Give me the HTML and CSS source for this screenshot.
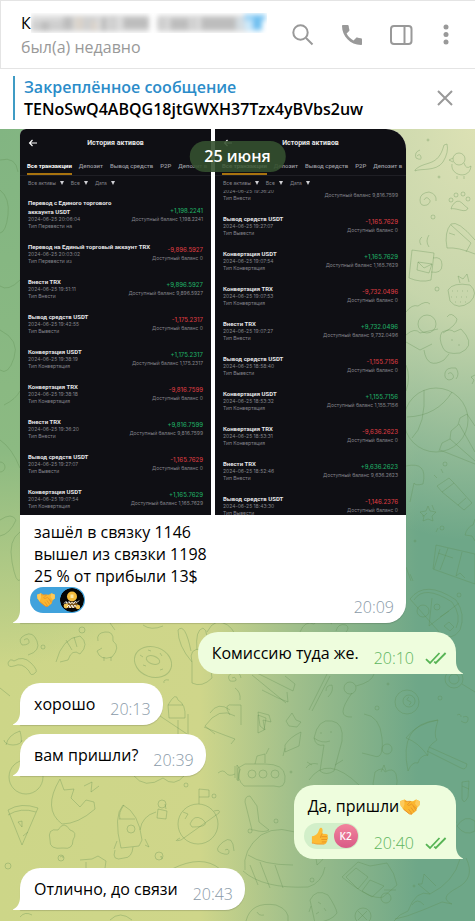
FILE: index.html
```html
<!DOCTYPE html>
<html lang="ru">
<head>
<meta charset="utf-8">
<meta name="viewport" content="width=device-width, initial-scale=1">
<title>Чат</title>
<link rel="stylesheet" href="styles.css">
</head>
<body>
<svg class="sprite" aria-hidden="true">
  <symbol id="handshake" viewBox="0 0 22 18">
    <path d="M1.2 3.2 5.6 1.6 8.4 3.4 11 2.9 14 3.2 17 1.6 20.8 3.2 20.6 7 18.4 9.4 17 13 12.6 16.4 9.6 15.6 4.2 11.2 1.6 7.2z" fill="#fbb62f"/>
    <path d="M5.6 1.6 1.2 3.2 1.6 7.2 4 10.4 5.4 6.4z" fill="#fdca5c"/>
    <path d="M17 1.6 20.8 3.2 20.6 7 18.6 9 16 5.8z" fill="#fdca5c"/>
    <path d="M6 3.2C8.4 3.8 9.8 3 11.6 3.4L8.4 6.6C9.4 8 11 7.2 12.4 6L17.4 10.6M14.6 8.600 17 12.400M12.200 9.800 15 13.800M9.800 11.400 12.800 15.600" fill="none" stroke="#e08a2a" stroke-width=".7" stroke-linecap="round" stroke-linejoin="round"/>
    <path d="M4.600 11.200 10.400 15.900 12.800 16.200" fill="none" stroke="#e68a26" stroke-width=".9"/>
  </symbol>
  <symbol id="thumb" viewBox="0 0 20 20">
    <path d="M1 10.4C3.6 10.4 6 8.6 7.6 6.4 8.8 4.6 9 1 10.8 .8 13 .8 13.4 3.6 12.4 7.4L17 7.8C19 8 19.4 10.2 18 10.8 19.6 11.6 19.2 13.6 17.8 13.8 18.8 14.8 18.2 16.4 17 16.6 17.4 18 16.4 19 15 19H8C5 19 3.6 18 1 17.8z" fill="#fdbb34"/>
    <path d="M12.4 7.4C11.6 9.6 10.4 10.2 10.6 11.6M12 10.8H17.8M12 13.8H17.6M12.4 16.6H16.8" fill="none" stroke="#e18a1e" stroke-width=".9" stroke-linecap="round"/>
    <path d="M1 17.8C3.6 18 5 19 8 19H15" fill="none" stroke="#ee9a2b" stroke-width="1"/>
  </symbol>
  <symbol id="ticks" viewBox="0 0 22 14">
    <path d="M1 8.2 5 12 14.5 2M9.2 10.6 10.8 12 20.6 2" fill="none" stroke="#57b455" stroke-width="1.8"/>
  </symbol>
  <symbol id="tail" viewBox="0 0 8 13">
    <path d="M8 0H7C7 6 4.500 10.500 0 12.400V13H8z" fill="currentColor"/>
  </symbol>
  <symbol id="back" viewBox="0 0 10 8">
    <path d="M9 4H1.500M4.500 1 1.500 4 4.500 7" fill="none" stroke="#fff" stroke-width="1.100"/>
  </symbol>
</svg>

<div class="app">
  <header class="topbar">
    <div class="peer">
      <h1 class="peer-name"><span>К</span>
        <svg class="veil" viewBox="0 0 236 20" aria-hidden="true">
          <defs><filter id="soft" x="-2%" y="-10%" width="104%" height="120%"><feGaussianBlur stdDeviation="2.600"/></filter></defs>
          <g filter="url(#soft)">
            <path fill="#dedede" d="M0 2H118V19H0zM127 2H218V19H127z"/>
            <path fill="#cfcfcf" d="M0 8H10V18H0zM18 7H32V18H18zM52 4H66V17H52zM78 3H86V18H78zM126 4H136V17H126zM160 4H166V17H160z"/>
            <path fill="#bdbdbd" d="M10 8H18V18H10zM32 4H42V17H32zM70 4H76V18H70zM92 4H118V16H92zM139 5H158V17H139zM170 4H206V17H170z"/>
            <path fill="#dad3ca" d="M44 4H52V17H44zM60 8H66V18H60z"/>
            <path fill="#d4dde2" d="M205 4H214V17H205z"/>
            <path fill="#9fd6f7" d="M213 1H235V8H213zM220 8H231V18H220z"/>
            <path fill="#6fc0f0" d="M222 3H231V16H222z"/>
            <path fill="#cdeafb" d="M214 8H221V18H214z"/>
          </g>
        </svg>
      </h1>
      <p class="peer-status">был(а) недавно</p>
    </div>
    <nav class="tools" aria-label="Действия">
      <button type="button" aria-label="Поиск"><svg viewBox="0 0 24 24"><circle cx="9.500" cy="9.500" r="7.200"/><path d="M15 15 21.500 21.500"/></svg></button>
      <button type="button" aria-label="Позвонить"><svg viewBox="0 0 24 24"><path class="solid" d="M2.800 2H7.600C8.200 2 8.600 2.400 8.700 3 8.800 4.400 9 5.600 9.400 6.800 9.500 7.200 9.400 7.700 9.100 8L6.600 10.500C8.200 13.500 10.500 15.900 13.500 17.400L16 14.900C16.300 14.600 16.800 14.500 17.200 14.600 18.400 15 19.600 15.200 20.900 15.300 21.600 15.400 22 15.800 22 16.400V20.900C22 21.600 21.600 22 20.900 22 10.500 22 2 13.500 2 3.100 2 2.400 2.300 2 2.800 2z"/></svg></button>
      <button type="button" aria-label="Боковая панель"><svg viewBox="0 0 24 24"><rect x="2" y="3" width="20.500" height="18" rx="3"/><path d="M15.500 3V21"/></svg></button>
      <button type="button" aria-label="Меню"><svg class="narrow" viewBox="4 0 16 24"><g class="solid"><circle cx="12" cy="4" r="2.500"/><circle cx="12" cy="11.500" r="2.500"/><circle cx="12" cy="19" r="2.500"/></g></svg></button>
    </nav>
  </header>

  <section class="pinned">
    <a class="pinned-link" href="#album">
      <strong>Закреплённое сообщение</strong>
      <span>TENoSwQ4ABQG18jtGWXH37Tzx4yBVbs2uw</span>
    </a>
    <button type="button" class="pinned-close" aria-label="Закрыть"><svg viewBox="0 0 16 16"><path d="M1 1 15 15M15 1 1 15"/></svg></button>
  </section>

  <main class="chat">
    <svg class="doodles" viewBox="0 129 475 792" preserveAspectRatio="xMinYMin slice" aria-hidden="true">
      <!-- upper right strip -->
      <path d="M415 170C425 160 438 168 444 145L447 144Q449 152 443 162C436 172 420 168 415 171z"/>
      <circle cx="459" cy="159" r="6"/><path d="M452 164C450 176 470 180 471 166Q466 170 464 163M453 158l-4 2 4 2M457 176v3M464 176v3"/>
      <path d="M424 200q2-4 5-1t-2 6q-7 2-7-5t9-8q8 2 7 9M417 156q3-3 4 1t-5 1q-2-6 4-8"/>
      <path d="M452 206q5-8 10-3t6 5q-1 4-8 2t-9-1z"/><circle cx="451" cy="200" r="2"/><circle cx="456" cy="195" r="2"/><circle cx="463" cy="194" r="2"/><circle cx="468" cy="199" r="2"/>
      <path d="M475 254Q458 247 447 248 444 232 451 224 458 220 475 240M451 225l20 18-5 9M449 233l6 2"/>
      <path d="M412 250l22 3-3 27q-10 3-22-2zM433 258q9-2 9 7t-11 7M418 262l14 2-3 9-12-3zM418 262l6 6 8-4M421 245q-3-5 1-8M429 247q-4-6 0-12"/>
      <path d="M448 290q5-8 22-5 9 8 0 17-12 9-20-1zM460 283l-2-7 5 3 4-5 2 8"/><path stroke-dasharray="1 4" d="M452 291h18M451 297h20M455 302h14"/>
      <circle cx="427" cy="324" r="9"/><path d="M406 335q9-8 14-2l18-4M406 342l14 8 12-6M424 350q3 20 20 10l5-6M406 312q6-8 12-6 8-6 12-2M443 333q14-8 14-14-6-8-10-2"/>
      <path d="M442 332q9-4 12 0l7-3 5 6q8 12-6 18-14 2-17-5-5-10-1-16zM452 339v2M459 344v2"/>
      <path d="M448 374q3-3 5 1t-4 5q-5-1-4-7t11-5q4 6 0 11M475 375l-4 2 3 3-2 4M406 365q5 12 0 26"/>
      <circle cx="436" cy="420" r="32"/><path d="M424 390q2 35-12 48M452 392q-15 24-45 25M467 414l-7 4-2 7-7 6-1 8-8 4-3 8M467 414l8 12M459 424l16 28M450 439l25 22M440 450l35 14M406 466q22-5 17 18-8 2-9-1l-4 19"/>
      <path d="M437 486l12-8 5 5-12 9zM442 492l22 18 8-7-18-20M458 505l8-7M437 478l-3-3M443 473l-2-4M428 506l2 5 6 1-4 4 1 5-5-2-5 2 1-5-4-4 6-1z"/>
      <circle cx="428" cy="140" r="1"/><circle cx="433" cy="217" r="2"/><circle cx="437" cy="289" r="2"/><circle cx="445" cy="464" r="2"/><circle cx="439" cy="177" r="1"/>
      <!-- left edge -->
      <path d="M0 160q16-4 18 12M0 190q10 8 8 25t-8 18M20 280q-12 12-20 6M0 330q20 10 14 28t-14 12M4 405q12-6 16-14M0 440q12 8 20 28M0 462a5 5 0 0 1 0 10M0 520q12-8 16 0-6 14-16 16M20 532q-12 8-8 30t8 18"/>
      <!-- between the album and the next messages -->
      <path d="M24 640q4-3 5 1t-7 4q-5-6 3-10t12 6-9 14M8 663q2-5 6-2 9-6 17 2t4 10q-4 4-6-2-7-9-15-5-6 2-6-3zM56 662q6-24 24-26 10 8 0 18-8-6-12 6l-8 2M66 640l6 10M74 637l3 10M98 641q-2-8 7-9t8 9q8 6-1 16-12 4-15-6l5-3M104 657v4M111 657v4"/>
      <ellipse cx="153" cy="662" rx="19" ry="15" transform="rotate(20 153 662)"/><ellipse cx="153" cy="660" rx="7" ry="4" transform="rotate(20 153 660)"/><path d="M140 655l3 2M148 650l3 1M160 653l2 3M143 665l3 1M160 670l3-1"/>
      <path d="M192 662q-14-16-14-32 7-8 13 21M197 650q-2-20 6-22 7 3 1 24M192 662q-4-14 10-13t8 14l2 15q-10 10-20 5zM232 678q3-2 4 1t-6 2q-4-6 3-8t8 5M207 632q4-8 10-10 12 0 18 12M143 625q8 6 20 1M110 623l5 7"/>
      <path d="M164 683q-1-4 5-3M168 705q8-14 10-5 8 4 7 18h-16zM168 705h15M230 715q-8-12 4-10l7 0v20M210 713q8-12 20-3"/>
      <circle cx="82" cy="630" r="3"/><circle cx="43" cy="647" r="2"/><path d="M0 688l10 8M6 745q2-10 14-14 2 8 1 11M4 740a9 5 0 0 0 18 0M160 716l27 18M178 720v16h10v-22"/>
      <!-- stars, drink, pizza -->
      <path d="M422 516q2 1 5-3M432 505l2 5M465 535q2-8 8-10l2-6M465 535l7 1 3 5M438 528l-2 4M436 545l39 9v30l-42-15zM440 549l-6 20M448 548q-4 12-8 22M462 552l-6 24 4-3 5 5M438 553l15 5"/>
      <path d="M410 599q15-20 46 1 10 14 4 30-8 12-20 3zM414 600q10-16 38 2 10 14 4 26M432 598l-3 28M429 626l30-23M440 617l9-6"/><circle cx="423" cy="611" r="6"/><circle cx="437" cy="607" r="3"/><path d="M444 626l5-4 5 5-4 4zM406 567l5 14M410 574l3 7"/>
      <circle cx="442" cy="528" r="2"/><circle cx="415" cy="541" r="1"/><circle cx="459" cy="595" r="2"/>
      <path d="M300 632q5-12 14-8 8-10 18 0M336 631q2-8 10-6 4 3 0 7"/>
      <circle cx="454" cy="679" r="9"/><circle cx="454" cy="679" r="5"/><path d="M462 684l13 8"/>
      <path d="M252 675l34 28M257 673l36 18 2-7-10-8M262 690l16 8 10 4-1-10M309 710l18-36 7-10M312 711l18-35"/>
      <circle cx="350" cy="688" r="6"/><path d="M356 686q16-4 18-12M352 693q-18 25 0 24M328 697q6-6 4-12-6 0-6 6"/>
      <circle cx="407" cy="702" r="12"/><circle cx="409" cy="701" r="6"/><path d="M409 697q-4 3 0 4t0 4M457 715q4-2 4 2M235 688q6 4 5 12M258 712l2 14 5 4-2-10 8 2-2-7zM292 713l4 7 5 2-4 5-8-1-3-5z"/>
      <circle cx="388" cy="684" r="1"/><circle cx="377" cy="708" r="2"/><circle cx="440" cy="698" r="2"/>
      <!-- right middle -->
      <path d="M258 715l8 3-2 12-6 3zM285 745q5-8 16-13l-2 14-14 6zM285 748l-2 8"/>
      <path d="M314 738q4-20 18-17 12 2 10 20l-8 30q-8 5-14 0l4-26q-8 2-10-7zM314 738q8 6 16 3M321 732v2M331 731v2M306 768q4-6 12-4M335 765l8-5M309 780q18-26 50 5M312 765l-5-3"/>
      <path d="M364 714q16 2 18 24t-8 18l-12-3"/><circle cx="387" cy="749" r="5"/>
      <path d="M438 720q-40 4-30 51 4-10 10-8 2-8 10-8-2-8 9-15-4-4 1-20zM406 738q12 4 22 18M438 720q-22 4-32 18M429 747l38 17q-1 7-6 4l-34-17"/>
      <path d="M375 772q8-6 10 0 8-5 11 2 4 15-6 20-14 4-17-10zM381 772l3-7 2 6"/>
      <path d="M240 769q-4 10 4 17h30q12 4 11-10-1-12-20-12h-20l-7 4v13zM255 764l2-8 8-2v9M266 754l3-6M240 769l-3-4v15"/><circle cx="252" cy="774" r="4"/><circle cx="263" cy="774" r="4"/><circle cx="275" cy="774" r="4"/>
      <circle cx="291" cy="772" r="1"/><path d="M462 782l7-1-1 16q-4 8-6 2zM462 786l7 3M457 826q8-12 18-5v10q-10 6-18-5zM456 823l-1-7M463 717q6-2 5 3t-7 1"/>
      <!-- lower left -->
      <circle cx="26" cy="777" r="17"/><path d="M60 779q-18 30 2 45 16 0 33-15l-1-7-8-2-6 7-9-9 3-9-10 1zM84 786l8-4-1 10 8-6M50 840q-3-12 8-10 6-10 12 0 8 2 3 10 0 10-10 8-14 2-13-8z"/>
      <path d="M8 810q13-8 30-2l-16 37zM8 815q13-8 28-3M18 822l4-1v6zM28 832l-5 4"/>
      <path d="M121 848q-8-32 2-43 16 8 19 35l-3 6zM119 819h16M124 805q-6 8-4 14"/><circle cx="131" cy="829" r="4"/><path d="M140 830q2-14 16-18M114 849l3-8M145 845l4 2-4-8M115 850q-4 12 9 8 8 0 9-11"/><circle cx="162" cy="804" r="4"/><path d="M158 809l9 2-1 8-9-1zM166 809l-1-5"/>
      <circle cx="198" cy="824" r="20"/><path d="M180 838q-8 4 1 2l38-27q2-4-5-2M199 804v-15l10 1v7h-10M190 824q4-10 12-5 10 8-10 8zM183 812l5 2-3 5"/>
      <path d="M225 850q4-2 4 2t-8 1 2-11 11 9M60 857q3-2 3 1M80 860l12-1 6-3 8 5-1 7M86 869v-7M33 875q5-10 12-5M160 857q2-2 2 2M172 869q30-15 48 0M20 917q5-6 12-2M110 920q10-10 22 0M215 734l-10-8q14-20 30-10M204 727q12 5 31 12l-4 5M218 773q5-4 8 0t9 1M235 778v-12M133 775q12 15 30 3 11 10 22-3"/>
      <circle cx="186" cy="785" r="2"/><circle cx="214" cy="796" r="2"/><circle cx="61" cy="858" r="3"/><circle cx="8" cy="866" r="3"/><circle cx="159" cy="856" r="4"/>
      <!-- lower right: whale, candy, gator, ice cream -->
      <path d="M252 830l-5-20-2-8q0-6 5-6l7 10 2 16 10 8q-5 3-15 0zM245 870q-3-20 16-35 20-12 44 2 11 12 12 28 10-8 8-13l-6-1M243 871q20 18 65 16 14-4 17-20M248 855q15 10 45 10M250 865l8 20M260 862l10 26M275 865l8 23"/>
      <path d="M342 877l16-15 12 4 17-3q8 10 10 22l-14 12q-12 4-41-20zM346 877l10-9 12 9-10 12zM370 880l14 6-12 11-10-6zM384 890h12"/><circle cx="386" cy="898" r="5"/>
      <path d="M394 921q5-7 14-10 8-22 22-17 24-12 30-35l-8-7M466 858q10 20-9 30t-5 16l-10-2q-18 8-35 14l-12 3M430 894l-12-10 4 0 2-10 12 12M412 905q5-8 12 0"/>
      <path d="M310 900q6-12 18-5 8 12 9 18-5 8-22 10zM311 906l-2 6M318 902l3 2M324 908l2 3M316 914l3-2"/>
      <circle cx="363" cy="916" r="8"/><path d="M358 911l9 9M367 911l-9 9M246 921q5-20 30-16 14 5 12 16M257 912q2 4 7 3"/>
      <circle cx="276" cy="821" r="2"/><circle cx="250" cy="831" r="2"/><circle cx="312" cy="880" r="2"/><circle cx="414" cy="886" r="1"/>
    </svg>
    <time class="day">25 июня</time>

    <article class="bubble in album" id="album">
      <div class="shots">
        <section class="shot">
          <div class="shot-head"><svg><use href="#back"/></svg><h2>История активов</h2></div>
          <div class="shot-tabs"><b>Все транзакции</b><span>Депозит</span><span>Вывод средств</span><span>P2P</span><span>Депозит в</span></div>
          <div class="shot-filters"><span>Все активы</span><span>Все</span><span>Дата</span></div>
          <ul class="ops">
            <li><div><h3>Перевод с Единого торгового<br>аккаунта USDT</h3><p>2024-06-25 20:06:04</p><p>Тип Перевести на</p></div><div class="sum"><b class="up">+1,198.2241</b><p>Доступный баланс 1,198.2241</p></div></li>
            <li><div><h3>Перевод на Единый торговый аккаунт TRX</h3><p>2024-06-25 20:03:02</p><p>Тип Перевести из</p></div><div class="sum"><b class="down">-9,896.5927</b><p>Доступный баланс 0</p></div></li>
            <li><div><h3>Внести TRX</h3><p>2024-06-25 19:51:11</p><p>Тип Внести</p></div><div class="sum"><b class="up">+9,896.5927</b><p>Доступный баланс 9,896.5927</p></div></li>
            <li><div><h3>Вывод средств USDT</h3><p>2024-06-25 19:42:55</p><p>Тип Вывести</p></div><div class="sum"><b class="down">-1,175.2317</b><p>Доступный баланс 0</p></div></li>
            <li><div><h3>Конвертация USDT</h3><p>2024-06-25 19:38:19</p><p>Тип Конвертация</p></div><div class="sum"><b class="up">+1,175.2317</b><p>Доступный баланс 1,175.2317</p></div></li>
            <li><div><h3>Конвертация TRX</h3><p>2024-06-25 19:38:18</p><p>Тип Конвертация</p></div><div class="sum"><b class="down">-9,816.7599</b><p>Доступный баланс 0</p></div></li>
            <li><div><h3>Внести TRX</h3><p>2024-06-25 19:36:20</p><p>Тип Внести</p></div><div class="sum"><b class="up">+9,816.7599</b><p>Доступный баланс 9,816.7599</p></div></li>
            <li><div><h3>Вывод средств USDT</h3><p>2024-06-25 19:27:07</p><p>Тип Вывести</p></div><div class="sum"><b class="down">-1,165.7629</b><p>Доступный баланс 0</p></div></li>
            <li><div><h3>Конвертация USDT</h3><p>2024-06-25 19:07:54</p><p>Тип Конвертация</p></div><div class="sum"><b class="up">+1,165.7629</b><p>Доступный баланс 1,165.7629</p></div></li>
          </ul>
        </section>
        <section class="shot">
          <div class="shot-head"><svg><use href="#back"/></svg><h2>История активов</h2></div>
          <div class="shot-tabs"><b>Все транзакции</b><span>Депозит</span><span>Вывод средств</span><span>P2P</span><span>Депозит в</span></div>
          <div class="shot-filters"><span>Все активы</span><span>Все</span><span>Дата</span></div>
          <ul class="ops scrolled">
            <li><div><h3>Внести TRX</h3><p>2024-06-25 19:36:20</p><p>Тип Внести</p></div><div class="sum"><b class="up">+9,816.7599</b><p>Доступный баланс 9,816.7599</p></div></li>
            <li><div><h3>Вывод средств USDT</h3><p>2024-06-25 19:27:07</p><p>Тип Вывести</p></div><div class="sum"><b class="down">-1,165.7629</b><p>Доступный баланс 0</p></div></li>
            <li><div><h3>Конвертация USDT</h3><p>2024-06-25 19:07:54</p><p>Тип Конвертация</p></div><div class="sum"><b class="up">+1,165.7629</b><p>Доступный баланс 1,165.7629</p></div></li>
            <li><div><h3>Конвертация TRX</h3><p>2024-06-25 19:07:53</p><p>Тип Конвертация</p></div><div class="sum"><b class="down">-9,732.0496</b><p>Доступный баланс 0</p></div></li>
            <li><div><h3>Внести TRX</h3><p>2024-06-25 19:07:27</p><p>Тип Внести</p></div><div class="sum"><b class="up">+9,732.0496</b><p>Доступный баланс 9,732.0496</p></div></li>
            <li><div><h3>Вывод средств USDT</h3><p>2024-06-25 18:58:40</p><p>Тип Вывести</p></div><div class="sum"><b class="down">-1,155.7156</b><p>Доступный баланс 0</p></div></li>
            <li><div><h3>Конвертация USDT</h3><p>2024-06-25 18:53:32</p><p>Тип Конвертация</p></div><div class="sum"><b class="up">+1,155.7156</b><p>Доступный баланс 1,155.7156</p></div></li>
            <li><div><h3>Конвертация TRX</h3><p>2024-06-25 18:53:31</p><p>Тип Конвертация</p></div><div class="sum"><b class="down">-9,636.2623</b><p>Доступный баланс 0</p></div></li>
            <li><div><h3>Внести TRX</h3><p>2024-06-25 18:52:46</p><p>Тип Внести</p></div><div class="sum"><b class="up">+9,636.2623</b><p>Доступный баланс 9,636.2623</p></div></li>
            <li><div><h3>Вывод средств USDT</h3><p>2024-06-25 18:43:30</p><p>Тип Вывести</p></div><div class="sum"><b class="down">-1,146.2376</b><p>Доступный баланс 0</p></div></li>
          </ul>
        </section>
      </div>
      <div class="caption">
        <p class="text">зашёл в связку 1146<br>вышел из связки 1198<br>25 % от прибыли 13$</p>
        <div class="foot">
          <button type="button" class="reaction mine" aria-label="Рукопожатие">
            <svg class="emoji"><use href="#handshake"/></svg>
            <svg class="avatar" viewBox="0 0 24 24">
              <circle cx="12" cy="12" r="12" fill="#050505"/>
              <circle cx="12" cy="8.500" r="5" fill="#f4bb3c"/>
              <path d="M6 16q6-5 12 0l1 4H5z" fill="#7b561b"/>
              <circle cx="6" cy="18" r="2.400" fill="#f0c352"/><circle cx="18" cy="19" r="2.200" fill="#f0c352"/>
              <path d="M10.500 6.500h3v3.500h-3z" fill="#fde9a6"/>
              <path d="M4 15.500l2-2 1 2 2-2 1 2 2-1 2 1 1-2 2 1 2-2M7 19l2-2 1 3 2-3 1 3 2-3 1 2" fill="none" stroke="#fff" stroke-width=".9"/>
            </svg>
          </button>
          <time>20:09</time>
        </div>
      </div>
      <svg class="tail"><use href="#tail"/></svg>
    </article>

    <article class="bubble out line"><p class="text">Комиссию туда же.</p><div class="meta"><time>20:10</time><svg class="ticks"><use href="#ticks"/></svg></div><svg class="tail"><use href="#tail"/></svg></article>
    <article class="bubble in line"><p class="text">хорошо</p><div class="meta"><time>20:13</time></div><svg class="tail"><use href="#tail"/></svg></article>
    <article class="bubble in line"><p class="text">вам пришли?</p><div class="meta"><time>20:39</time></div><svg class="tail"><use href="#tail"/></svg></article>
    <article class="bubble out reacted">
      <p class="text">Да, пришли<svg class="emoji"><use href="#handshake"/></svg></p>
      <div class="foot">
        <button type="button" class="reaction" aria-label="Палец вверх"><svg class="emoji"><use href="#thumb"/></svg><span class="avatar initials">К2</span></button>
        <div class="meta"><time>20:40</time><svg class="ticks"><use href="#ticks"/></svg></div>
      </div>
      <svg class="tail"><use href="#tail"/></svg>
    </article>
    <article class="bubble in line"><p class="text">Отлично, до связи</p><div class="meta"><time>20:43</time></div><svg class="tail"><use href="#tail"/></svg></article>
  </main>
</div>
</body>
</html>
```
FILE: styles.css
```css
* { box-sizing: border-box; }
body, h1, h2, h3, p, ul { margin: 0; padding: 0; }
ul { list-style: none; }
body {
  font-family: "Open Sans", "Noto Sans", sans-serif;
  font-size: 16px;
  line-height: 22px;
  color: #000;
  background: #fff;
}
button {
  border: 0;
  padding: 0;
  background: none;
  font: inherit;
  cursor: pointer;
}
svg { display: block; }
.sprite { position: absolute; width: 0; height: 0; }
.app { display: flex; flex-direction: column; min-height: 100vh; }

/* Header */
.topbar {
  display: flex;
  align-items: center;
  justify-content: space-between;
  height: 69px;
  padding: 0 21px 0 20px;
  border: solid #e4e4e4;
  border-width: 1px 0 1px 1px;
}
.peer-name {
  display: flex;
  align-items: center;
  height: 24px;
  font-size: 16px;
  font-weight: 500;
}
.veil { width: 236px; height: 20px; }
.peer-status { line-height: 24px; color: #999; }
.tools { display: flex; gap: 25px; }
.tools svg {
  width: 24px;
  height: 24px;
  fill: none;
  stroke: #999;
  stroke-width: 2;
}
.tools .narrow { width: 16px; }
.tools .solid { fill: #999; stroke: none; }

/* Pinned message */
.pinned {
  display: flex;
  align-items: center;
  justify-content: space-between;
  height: 60px;
  padding: 0 22px 2px 13px;
}
.pinned-link {
  display: flex;
  flex-direction: column;
  padding-left: 9px;
  border-left: 2px solid #3f9bc4;
  color: #000;
  text-decoration: none;
  font-weight: 600;
}
.pinned-link strong { font-weight: 600; color: #2b8cc9; }
.pinned-close svg {
  width: 16px;
  height: 16px;
  stroke: #999;
  stroke-width: 2;
}

/* Chat */
.chat {
  position: relative;
  flex: 1;
  display: flex;
  flex-direction: column;
  align-items: flex-start;
  gap: 9px;
  padding: 0 19px 11px 20px;
  overflow: hidden;
  background:
    radial-gradient(ellipse 60% 52% at 100% 0, #dce1b4 0, #dce1b4cc 45%, #dce1b400 100%),
    radial-gradient(ellipse 70% 68% at 0 0, #82b582 0, #8cba82 60%, #a4c58200 100%),
    linear-gradient(to right, #cdd688 0, #cfd68a 42%, #a0bf8b 62%, #6ea788 88%);
}
.doodles {
  position: absolute;
  inset: 0;
  width: 100%;
  height: 100%;
  fill: none;
  stroke: #5c8c50;
  stroke-opacity: .32;
}
.day {
  position: absolute;
  z-index: 2;
  top: 12px;
  left: 50%;
  transform: translateX(-50%);
  padding: 4px 15px 5px;
  border-radius: 16px;
  background: #34502fe6;
  color: #fff;
  font-weight: 600;
}

/* Bubbles */
.bubble {
  --fill: #fff;
  position: relative;
  border-radius: 20px;
  background: var(--fill);
}
.bubble.in { border-bottom-left-radius: 0; box-shadow: 0 1px 1px #00000026; }
.bubble.out { --fill: #eefddd; align-self: flex-end; border-bottom-right-radius: 0; }
.tail {
  position: absolute;
  bottom: 0;
  left: -7px;
  width: 8px;
  height: 13px;
  color: var(--fill);
}
.out .tail { left: auto; right: -7px; transform: scaleX(-1); }
.line { display: flex; gap: 15px; height: 42px; padding: 10px 12px 5px 14px; }
.out.line { padding-right: 9px; }
.meta { display: flex; align-items: center; align-self: flex-end; gap: 11px; }
time { white-space: nowrap; }
.bubble time { line-height: 22px; font-weight: 300; color: #8a9aa8; }
.bubble.out time { color: #5fb560; }
.ticks { width: 22px; height: 14px; }
.emoji { width: 22px; height: 18px; }
.text .emoji { display: inline-block; vertical-align: -4px; }
.foot { display: flex; justify-content: space-between; }
.foot .meta, .foot > time { margin-top: 9px; }
.reaction {
  display: flex;
  align-items: center;
  gap: 4px;
  height: 26px;
  padding: 0 1px 0 6px;
  border-radius: 13px;
  background: #d2efc9;
}
.reaction.mine { background: #40a2dc; }
.reaction .emoji { width: 20px; }
.avatar { width: 24px; height: 24px; border-radius: 50%; }
.initials {
  background: linear-gradient(#f2849c, #d95a87);
  color: #fff;
  font-size: 10px;
  font-weight: 600;
  line-height: 24px;
  text-align: center;
}
.reacted { padding: 10px 9px 5px 10px; }
.reacted .text { padding: 0 0 6px 4px; }
.reacted .foot { gap: 15px; }
.caption { padding: 6px 12px 5px 10px; }
.caption .text { padding-left: 4px; }

/* Photos of the transaction history */
.album { width: 100%; max-width: 386px; }
.bubble.album { border-top-left-radius: 6px; }
.shots {
  display: grid;
  grid-template-columns: 1fr 1fr;
  gap: 4px;
  overflow: hidden;
  border-radius: 6px 20px 0 0;
}
.shot {
  display: flex;
  flex-direction: column;
  aspect-ratio: 191 / 386;
  min-width: 0;
  min-height: 0;
  overflow: hidden;
  background: #0f0f14;
  color: #e6e6e8;
  font: 5px/7px Inter, sans-serif;
}
.shot-head {
  display: grid;
  grid-template-columns: 10px 1fr 10px;
  align-items: center;
  height: 28px;
  padding: 0 8px;
}
.shot-head svg { width: 10px; height: 8px; }
.shot-head h2 { font: 700 7px/9px Roboto, sans-serif; text-align: center; }
.shot-tabs {
  display: flex;
  gap: 7px;
  height: 19px;
  padding-left: 7px;
  border-bottom: 1px solid #1f1f25;
  font: 500 6px/18px Roboto, sans-serif;
  white-space: nowrap;
  color: #9b9ba2;
}
.shot-tabs b { font-weight: 700; color: #fff; border-bottom: 2px solid #a8730f; }
.shot-filters {
  display: flex;
  gap: 7px;
  height: 14px;
  padding-left: 8px;
  line-height: 14px;
  color: #85858c;
}
.shot-filters span::after {
  content: "";
  display: inline-block;
  margin-left: 4px;
  border: solid transparent;
  border-width: 4px 2px 0;
  border-top-color: #d0d0d4;
}
.ops {
  flex: 1;
  display: flex;
  flex-direction: column;
  gap: 12px;
  min-height: 0;
  padding: 8px 8px 0;
  overflow: hidden;
  color: #85858c;
}
.ops li {
  display: flex;
  flex: none;
  align-items: center;
  justify-content: space-between;
  white-space: nowrap;
}
.ops h3 { font: 700 6px/9px Roboto, sans-serif; color: #e6e6e8; }
.ops.scrolled li:first-child { margin-top: -19px; }
.sum { padding-top: 1px; text-align: right; line-height: 8px; }
.sum b { display: block; font-size: 6px; font-weight: 500; }
.up { color: #1fa862; }
.down { color: #d63a40; }
```
